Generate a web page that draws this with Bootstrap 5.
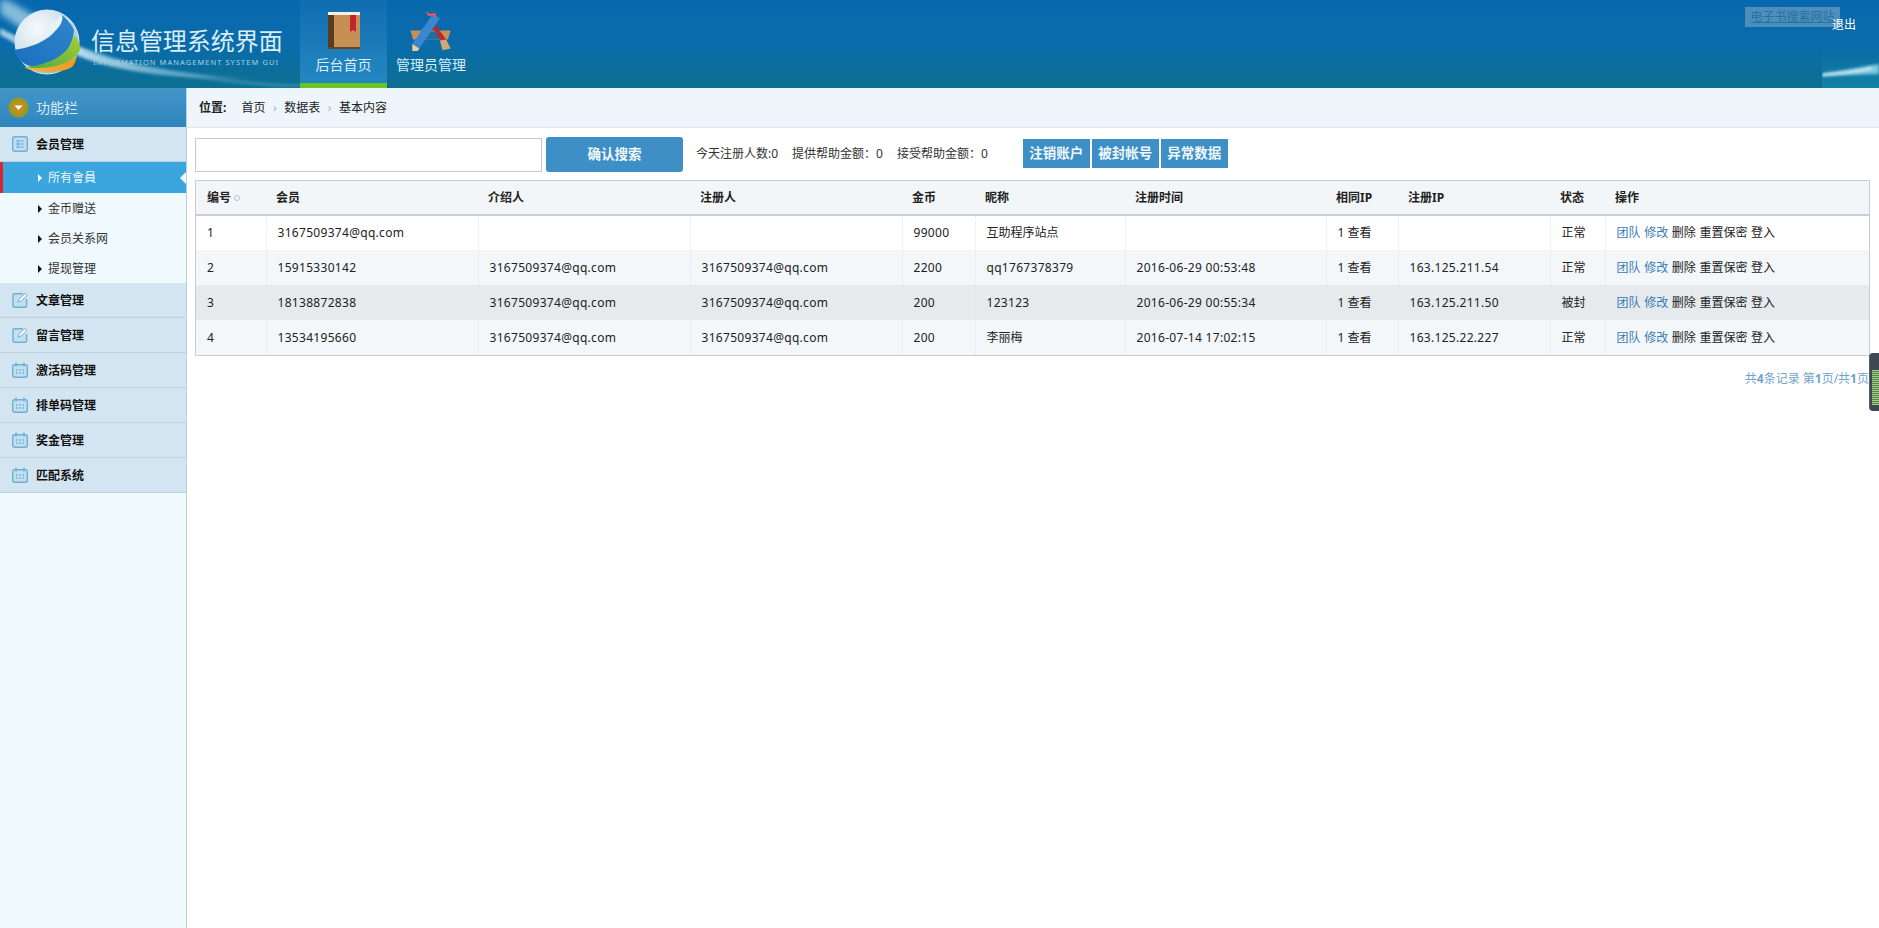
<!doctype html>
<html lang="zh-CN">
<head>
<meta charset="utf-8">
<title>信息管理系统界面</title>
<link href="https://cdn.jsdelivr.net/npm/bootstrap@5.3.0/dist/css/bootstrap.min.css" rel="stylesheet">
<style>
html,body{height:100%;overflow:hidden}
body{font:12px/1.5 "Noto Sans","Noto Sans CJK SC",sans-serif;color:#222;background:#fff}
.topbar{position:relative;height:88px;background:linear-gradient(180deg,#0768ad 0%,#0a6cab 50%,#0c6f90 100%);overflow:hidden}
.deco{position:absolute;left:0;top:0;pointer-events:none}
.deco-right{position:absolute;right:0;top:50px;pointer-events:none}
.brand{position:relative;width:300px;padding:26px 0 0 91px;color:#dcedf6}
.brand-name{font-size:24px;line-height:30px;letter-spacing:-.05px;white-space:nowrap}
.brand-sub{font-size:7.5px;line-height:10px;letter-spacing:1.05px;color:#a4d2e6;white-space:nowrap;margin-top:1px;padding-left:2px}
.tab-item{width:87px;height:88px;position:relative;color:#d9edf7;font-size:14px;text-align:center;text-decoration:none;padding-top:11px;display:block}
.tab-item svg{display:block;margin:0 auto}
.tab-item span{display:block;line-height:20px;margin-top:3px;white-space:nowrap}
.tab-icon{height:41px}
.tab-tool{margin-top:-1px}
.tab-on{background:linear-gradient(180deg,#0f6db0 0%,#2386c0 94%);border-bottom:5px solid #66c71f}
.tab-wide{width:88px}
.search-site{position:absolute;left:1745px;top:7px;width:95px;height:20px;background:#4d8fbc;color:#27709f;font-size:12px;line-height:20px;text-align:center;white-space:nowrap}
.quit{position:absolute;left:1832px;top:15px;color:#fff;font-size:12px;text-decoration:none;line-height:20px}
.work{height:840px}
.side{width:187px;flex:none;background:#f0f9fd;border-right:1px solid #b7cfde;height:100%}
.side-head{height:39px;background:linear-gradient(180deg,#4395c9,#2f86bc);color:#d8ecf7;font-size:14px;padding-left:8px;gap:7px}
.grp{height:35px;background:#d3e5f0;border-bottom:1px solid #bdd2df;font-weight:700;color:#111;padding:2px 0 0 12px;gap:8px;text-decoration:none}
.grp svg{margin-top:-2px}
.sub{height:30px;padding:1px 0 0 38px;color:#333;gap:6px;text-decoration:none;position:relative}
.sub::before{content:"";border-left:4px solid #111;border-top:4px solid transparent;border-bottom:4px solid transparent}
.sub-on{background:#3aa6dd;color:#eaf6fc;border-left:3px solid #d9262c;padding-left:35px;height:31px}
.sub-on::before{border-left-color:#fff}
.sub-on::after{content:"";position:absolute;right:0;top:10px;border-right:6px solid #f0f9fd;border-top:6px solid transparent;border-bottom:6px solid transparent}
.crumbs{height:40px;background:#eef6fb;border-bottom:1px solid #dde8ef;padding:1px 0 0 12px;color:#222}
.crumbs b{margin-right:15px}
.crumbs .breadcrumb{--bs-breadcrumb-divider:"›";--bs-breadcrumb-margin-bottom:0;--bs-breadcrumb-item-padding-x:7.5px;--bs-breadcrumb-divider-color:#a9b4bb;font-size:12px}
.crumbs .breadcrumb-item.active{color:#222}
.tools-row{height:52px;padding:0 0 0 8px}
.kw{width:347px;height:34px;border:1px solid #c9c9c9;border-radius:0;margin-top:2px}
.go{width:137px;height:35px;margin-left:4px;background:#3d8fc5;border:0;border-radius:3px;color:#f0f8fc;font-weight:700;font-size:13.5px;padding:0;--bs-btn-hover-bg:#3d8fc5}
.stat{color:#333;white-space:nowrap}
.s1{margin-left:13px}.s2{margin-left:14px}.s3{margin-left:14px}
.mini{height:29px;background:#3d8fc5;border:0;border-radius:0;color:#f0f8fc;font-weight:700;font-size:13.5px;padding:0;width:67px;margin:-2px 0 0 2px;white-space:nowrap}
.mini-first{margin-left:35px}
.grid-wrap{margin:0 9px 0 8px;border:1px solid #c8cdd1}
.user-table{table-layout:fixed;margin:0;width:100%;font-size:12px;color:#222}
.user-table>:not(caption)>*>*{padding:0 0 0 10px;height:35px;vertical-align:middle;border:0;box-shadow:none;white-space:nowrap;color:#222}
.user-table>thead>tr>th{height:34px;background:#f3f6f8;border-bottom:2px solid #c8ced2;font-weight:700}
.user-table>thead>tr>th:first-child{padding-left:11px}
.user-table>tbody>tr>td{border-left:1px dotted #e2e7ea;background:#fff;padding-left:11px}
.user-table>tbody>tr>td:first-child{border-left:0;padding-left:11px}
.user-table>tbody>tr>td.latin{letter-spacing:.3px}
.user-table>tbody>tr:nth-child(2)>td,.user-table>tbody>tr:nth-child(4)>td{background:#f3f7fa}
.user-table>tbody>tr:nth-child(3)>td{background:#e6eaed}
.user-table>tbody>tr>td.ops{word-spacing:.5px}
.user-table th:nth-child(1){width:70px}.user-table th:nth-child(2){width:212px}.user-table th:nth-child(3){width:212px}
.user-table th:nth-child(4){width:212px}.user-table th:nth-child(5){width:73px}.user-table th:nth-child(6){width:150px}
.user-table th:nth-child(7){width:201px}.user-table th:nth-child(8){width:72px}.user-table th:nth-child(9){width:152px}
.user-table th:nth-child(10){width:55px}
.sort-mark{display:inline-block;width:6px;height:6px;border:1px solid #b7c3ca;border-radius:50%;margin-left:3px;vertical-align:1px}
.act{color:#3a7cb4;text-decoration:none}
.pager-line{padding:14px 10px 0 0;color:#6ea3cd;text-align:right}
.pager-line b{font-weight:700}
.dock{position:absolute;right:0;top:353px;width:10px;height:58px;background:#3d4854;border-radius:4px 0 0 4px;border-left:1px solid #59646e}
.dock i{position:absolute;left:2px;right:0;top:17px;height:35px;background:repeating-linear-gradient(180deg,#a9cf6d 0 1px,#50806a 1px 2px)}
</style>
</head>
<body>
<header class="topbar d-flex">
  <svg class="deco" width="420" height="88" viewBox="0 0 420 88" aria-hidden="true">
    <defs>
      <filter id="soft" x="-20%" y="-50%" width="140%" height="200%"><feGaussianBlur stdDeviation="1.4"/></filter>
      <filter id="softer" x="-20%" y="-50%" width="140%" height="200%"><feGaussianBlur stdDeviation="3"/></filter>
      <linearGradient id="beam" x1="0" x2="1"><stop offset="0" stop-color="#d8f2fb" stop-opacity=".85"/><stop offset="1" stop-color="#cfeefa" stop-opacity="0"/></linearGradient>
      <radialGradient id="silver" cx=".35" cy=".3" r=".8"><stop offset="0" stop-color="#f6fafc"/><stop offset=".6" stop-color="#cfe0ea"/><stop offset="1" stop-color="#7fb3d2"/></radialGradient>
      <linearGradient id="blue" x1="0" x2="1" y1="1" y2="0"><stop offset="0" stop-color="#1b6fc0"/><stop offset="1" stop-color="#2f86c9"/></linearGradient>
      <linearGradient id="green" x1="0" x2="1" y1="1" y2="0"><stop offset="0" stop-color="#4da84a"/><stop offset="1" stop-color="#a9cf2c"/></linearGradient>
      <linearGradient id="orange" x1="0" x2="1"><stop offset="0" stop-color="#e9b84a"/><stop offset="1" stop-color="#ee9a1c"/></linearGradient>
    </defs>
    <path d="M0 0 L8 0 L38 18 L24 30 L0 14Z" fill="#d8f2fb" opacity=".6" filter="url(#softer)"/>
    <path d="M0 28 L24 40 L20 46 L0 35Z" fill="#d8f2fb" opacity=".7" filter="url(#soft)"/>
    <path d="M78 46 C120 64 170 75 262 78 C170 81 110 70 74 54Z" fill="url(#beam)" filter="url(#soft)"/>
    <path d="M84 50 C150 72 230 84 300 86" fill="none" stroke="#7cc2df" stroke-opacity=".35" stroke-width="3" filter="url(#soft)"/>
    <circle cx="47" cy="42" r="32" fill="url(#silver)" stroke="#d5e8f2" stroke-width="1"/>
    <path d="M62 15 C62 30 44 46 14 50 C17 62 28 67 38 67 C58 64 73 50 74 30 C72 25 67 19 62 15Z" fill="url(#blue)"/>
    <path d="M74 35 C72 50 56 64 26 67 C45 72 72 66 80 50 C80 45 78 39 74 35Z" fill="url(#green)"/>
    <path d="M77 56 C65 66 45 70 24 67 C35 74 64 74 73 66 C75 63 76 60 77 56Z" fill="url(#orange)"/>
    <path d="M50 25 C54 22 58 20 62 15 C64 22 58 30 50 34Z" fill="#e8f3f8"/>
  </svg>
  <div class="brand">
    <div class="brand-name">信息管理系统界面</div>
    <div class="brand-sub">INFORMATION MANAGEMENT SYSTEM GUI</div>
  </div>
  <nav class="d-flex position-relative">
    <a class="tab-item tab-on" href="#">
      <svg class="tab-icon" width="34" height="41" viewBox="0 0 34 41" aria-hidden="true">
        <rect x="1" y="1" width="32" height="37" rx="1" fill="#c88f55"/>
        <rect x="1" y="1" width="6" height="37" fill="#5b3a20"/>
        <rect x="1" y="1" width="32" height="3" fill="#f5f1e8"/>
        <rect x="1" y="36" width="32" height="2" fill="#6b4425"/>
        <path d="M23 4h6v17l-3-2-3 2z" fill="#c3252c"/>
      </svg>
      <span>后台首页</span>
    </a>
    <a class="tab-item tab-wide" href="#">
      <svg class="tab-icon tab-tool" width="46" height="46" viewBox="0 0 46 46" aria-hidden="true">
        <path d="M0 22h45l-3 10H3z" fill="#c98f55"/>
        <path d="M14 32l6-9h9l6 9z" fill="#1d6f9f"/>
        <path d="M23 17l4-3 13 18-5 2z" fill="#b82a30"/>
        <path d="M33 33l7-1 5 10-9 2z" fill="#d4a873"/>
        <path d="M25 3l8 5-23 34-8-5z" fill="#3a86d0"/>
        <path d="M2 37l8 5-2 3H2z" fill="#e6cfa0"/>
        <path d="M17 0l5 3 6-1 1 6-4-3-5 1z" fill="#dd5a60"/>
      </svg>
      <span>管理员管理</span>
    </a>
  </nav>
  <svg class="deco-right" width="57" height="38" viewBox="0 0 57 38" aria-hidden="true">
    <defs>
      <linearGradient id="patch" x1="0" x2="0" y1="0" y2="1"><stop offset="0" stop-color="#0d74a8" stop-opacity=".2"/><stop offset="1" stop-color="#1185a6"/></linearGradient>
      <filter id="glow" x="-20%" y="-200%" width="140%" height="500%"><feGaussianBlur stdDeviation="1.5"/></filter>
    </defs>
    <rect width="57" height="38" fill="url(#patch)"/>
    <path d="M0 24 L57 14 V24 L0 26Z" fill="#a9e2f3" opacity=".75" filter="url(#glow)"/>
    <path d="M0 25 C20 23 35 22 50 18" stroke="#fff" stroke-width="1.6" fill="none" filter="url(#glow)"/>
  </svg>
  <a class="search-site" href="#">电子书搜索网站</a>
  <a class="quit" href="#">退出</a>
</header>

<div class="work d-flex">
  <aside class="side">
    <div class="side-head d-flex align-items-center">
      <svg width="21" height="21" viewBox="0 0 21 21" aria-hidden="true"><circle cx="10.5" cy="10.5" r="10" fill="#9c9a1c"/><circle cx="10.5" cy="10.5" r="6.5" fill="#c08f20"/><path d="M6.5 8.5h8l-4 4.5z" fill="#fff"/></svg>
      <span>功能栏</span>
    </div>
    <a class="grp d-flex align-items-center" href="#">
      <svg width="16" height="16" viewBox="0 0 16 16" aria-hidden="true"><rect x=".7" y=".7" width="14.6" height="14.6" rx="2" fill="#c3deee" stroke="#6eafd4" stroke-width="1.4"/><path d="M4 5h8M4 8h8M4 11h8M6 4v8" stroke="#6eafd4"/></svg>
      <span>会员管理</span>
    </a>
    <a class="sub sub-on d-flex align-items-center" href="#">所有會員</a>
    <a class="sub d-flex align-items-center" href="#">金币赠送</a>
    <a class="sub d-flex align-items-center" href="#">会员关系网</a>
    <a class="sub d-flex align-items-center" href="#">提现管理</a>
    <a class="grp d-flex align-items-center" href="#">
      <svg width="16" height="16" viewBox="0 0 16 16" aria-hidden="true"><path d="M11 1.7H2.5a1.5 1.5 0 0 0-1.5 1.5v10.6a1.5 1.5 0 0 0 1.5 1.5h10.6a1.5 1.5 0 0 0 1.5-1.5V7" fill="#c3deee" stroke="#6eafd4" stroke-width="1.4"/><path d="M6 10l1-3 6-5.5 2 2-6 5.5z" fill="#fff" stroke="#6eafd4"/></svg>
      <span>文章管理</span>
    </a>
    <a class="grp d-flex align-items-center" href="#">
      <svg width="16" height="16" viewBox="0 0 16 16" aria-hidden="true"><path d="M11 1.7H2.5a1.5 1.5 0 0 0-1.5 1.5v10.6a1.5 1.5 0 0 0 1.5 1.5h10.6a1.5 1.5 0 0 0 1.5-1.5V7" fill="#c3deee" stroke="#6eafd4" stroke-width="1.4"/><path d="M6 10l1-3 6-5.5 2 2-6 5.5z" fill="#fff" stroke="#6eafd4"/></svg>
      <span>留言管理</span>
    </a>
    <a class="grp d-flex align-items-center" href="#">
      <svg width="16" height="16" viewBox="0 0 16 16" aria-hidden="true"><rect x=".7" y="2.7" width="14.6" height="12.6" rx="2" fill="#c3deee" stroke="#6eafd4" stroke-width="1.4"/><path d="M4 .5v4M12 .5v4" stroke="#6eafd4" stroke-width="1.4"/><path d="M4 8h1.5M7.2 8h1.5M10.5 8H12M4 11h1.5M7.2 11h1.5M10.5 11H12" stroke="#6eafd4" stroke-width="1.4"/></svg>
      <span>激活码管理</span>
    </a>
    <a class="grp d-flex align-items-center" href="#">
      <svg width="16" height="16" viewBox="0 0 16 16" aria-hidden="true"><rect x=".7" y="2.7" width="14.6" height="12.6" rx="2" fill="#c3deee" stroke="#6eafd4" stroke-width="1.4"/><path d="M4 .5v4M12 .5v4" stroke="#6eafd4" stroke-width="1.4"/><path d="M4 8h1.5M7.2 8h1.5M10.5 8H12M4 11h1.5M7.2 11h1.5M10.5 11H12" stroke="#6eafd4" stroke-width="1.4"/></svg>
      <span>排单码管理</span>
    </a>
    <a class="grp d-flex align-items-center" href="#">
      <svg width="16" height="16" viewBox="0 0 16 16" aria-hidden="true"><rect x=".7" y="2.7" width="14.6" height="12.6" rx="2" fill="#c3deee" stroke="#6eafd4" stroke-width="1.4"/><path d="M4 .5v4M12 .5v4" stroke="#6eafd4" stroke-width="1.4"/><path d="M4 8h1.5M7.2 8h1.5M10.5 8H12M4 11h1.5M7.2 11h1.5M10.5 11H12" stroke="#6eafd4" stroke-width="1.4"/></svg>
      <span>奖金管理</span>
    </a>
    <a class="grp d-flex align-items-center" href="#">
      <svg width="16" height="16" viewBox="0 0 16 16" aria-hidden="true"><rect x=".7" y="2.7" width="14.6" height="12.6" rx="2" fill="#c3deee" stroke="#6eafd4" stroke-width="1.4"/><path d="M4 .5v4M12 .5v4" stroke="#6eafd4" stroke-width="1.4"/><path d="M4 8h1.5M7.2 8h1.5M10.5 8H12M4 11h1.5M7.2 11h1.5M10.5 11H12" stroke="#6eafd4" stroke-width="1.4"/></svg>
      <span>匹配系统</span>
    </a>
  </aside>

  <main class="flex-grow-1 position-relative">
    <div class="crumbs d-flex align-items-center">
      <b>位置:</b>
      <ol class="breadcrumb">
        <li class="breadcrumb-item">首页</li>
        <li class="breadcrumb-item">数据表</li>
        <li class="breadcrumb-item active">基本内容</li>
      </ol>
    </div>
    <div class="tools-row d-flex align-items-center">
      <input class="form-control kw" type="text" aria-label="搜索">
      <button class="btn go" type="button">确认搜索</button>
      <span class="stat s1">今天注册人数:0</span>
      <span class="stat s2">提供帮助金额：0</span>
      <span class="stat s3">接受帮助金额：0</span>
      <button class="btn mini mini-first" type="button">注销账户</button>
      <button class="btn mini" type="button">被封帐号</button>
      <button class="btn mini" type="button">异常数据</button>
    </div>
    <div class="grid-wrap">
      <table class="table user-table">
        <thead>
          <tr><th>编号<i class="sort-mark"></i></th><th>会员</th><th>介绍人</th><th>注册人</th><th>金币</th><th>昵称</th><th>注册时间</th><th>相同IP</th><th>注册IP</th><th>状态</th><th>操作</th></tr>
        </thead>
        <tbody>
          <tr><td>1</td><td class="latin">3167509374@qq.com</td><td class="latin"></td><td class="latin"></td><td class="latin">99000</td><td>互助程序站点</td><td class="latin"></td><td>1 查看</td><td class="latin"></td><td>正常</td><td class="ops"><a class="act" href="#">团队</a> <a class="act" href="#">修改</a> 删除 重置保密 登入</td></tr>
          <tr><td>2</td><td class="latin">15915330142</td><td class="latin">3167509374@qq.com</td><td class="latin">3167509374@qq.com</td><td class="latin">2200</td><td class="latin">qq1767378379</td><td class="latin">2016-06-29 00:53:48</td><td>1 查看</td><td class="latin">163.125.211.54</td><td>正常</td><td class="ops"><a class="act" href="#">团队</a> <a class="act" href="#">修改</a> 删除 重置保密 登入</td></tr>
          <tr><td>3</td><td class="latin">18138872838</td><td class="latin">3167509374@qq.com</td><td class="latin">3167509374@qq.com</td><td class="latin">200</td><td class="latin">123123</td><td class="latin">2016-06-29 00:55:34</td><td>1 查看</td><td class="latin">163.125.211.50</td><td>被封</td><td class="ops"><a class="act" href="#">团队</a> <a class="act" href="#">修改</a> 删除 重置保密 登入</td></tr>
          <tr><td>4</td><td class="latin">13534195660</td><td class="latin">3167509374@qq.com</td><td class="latin">3167509374@qq.com</td><td class="latin">200</td><td>李丽梅</td><td class="latin">2016-07-14 17:02:15</td><td>1 查看</td><td class="latin">163.125.22.227</td><td>正常</td><td class="ops"><a class="act" href="#">团队</a> <a class="act" href="#">修改</a> 删除 重置保密 登入</td></tr>
        </tbody>
      </table>
    </div>
    <div class="pager-line">共<b>4</b>条记录 第<b>1</b>页/共<b>1</b>页</div>
  </main>
</div>
<div class="dock"><i></i></div>
<script src="https://cdn.jsdelivr.net/npm/bootstrap@5.3.0/dist/js/bootstrap.bundle.min.js"></script>
</body>
</html>
